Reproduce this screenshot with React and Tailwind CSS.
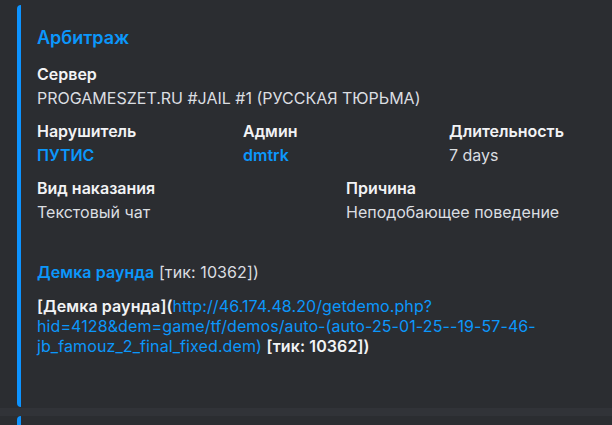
const fields = [
  { name: "Нарушитель", value: "ПУТИС", link: true, span: "col-span-4" },
  { name: "Админ", value: "dmtrk", link: true, span: "col-span-4" },
  { name: "Длительность", value: "7 days", span: "col-span-4" },
  { name: "Вид наказания", value: "Текстовый чат", span: "col-span-6" },
  { name: "Причина", value: "Неподобающее поведение", span: "col-span-6" },
];

const Field = ({ name, value, link, span }) => (
  <div className={span}>
    <div className="h-5 leading-5 text-base font-semibold text-[#f2f3f5]">{name}</div>
    <div
      className={`mt-1 h-5 leading-5 text-base ${
        link ? "font-semibold text-[#0b97fb]" : "text-[#dbdee1]"
      }`}
    >
      {value}
    </div>
  </div>
);

const App = () => {
  return (
    <div
      className="w-[612px] h-[425px] overflow-hidden bg-[#2b2d31]"
      style={{ fontFamily: 'Inter, "Noto Sans", sans-serif' }}
    >
      <div className="pt-[5px] pl-[17px]">
        {/* Embed */}
        <div className="w-[660px] border-l-4 border-[#0d93ff] rounded-[4px] bg-[#2b2d31] pl-4 pt-[22px] pb-[51px]">
          <div className="h-[22px] leading-[22px] text-lg font-semibold text-[#0b97fb]">Арбитраж</div>

          <div className="mt-[15px]">
            <div className="h-5 leading-5 text-base font-semibold text-[#f2f3f5]">Сервер</div>
            <div className="mt-1 h-5 leading-5 text-base text-[#dbdee1]">
              PROGAMESZET.RU #JAIL #1 (РУССКАЯ ТЮРЬМА)
            </div>
          </div>

          <div className="mt-[13px] w-[610px] grid grid-cols-12 gap-x-2 gap-y-[13px]">
            {fields.map((f) => (
              <Field key={f.name} {...f} />
            ))}
          </div>

          {/* Description */}
          <div className="mt-10 text-base leading-5 tracking-[0.1px] text-[#dbdee1]">
            <p>
              <span className="font-semibold text-[#0b97fb]">Демка раунда</span> [тик: 10362])
            </p>
            <p className="mt-[14px]">
              <span className="font-semibold text-[#f2f3f5]">[Демка раунда](</span>
              <span className="text-[#0b97fb]">
                http://46.174.48.20/getdemo.php?
                <br />
                hid=4128&amp;dem=game/tf/demos/auto-(auto-25-01-25--19-57-46-
                <br />
                jb_famouz_2_final_fixed.dem)
              </span>{" "}
              <span className="font-semibold text-[#f2f3f5]">[тик: 10362])</span>
            </p>
          </div>
        </div>

        {/* Gap band and next embed */}
        <div className="-ml-[17px] mt-px h-[8px] bg-[#313338]" />
        <div className="w-[660px] h-10 border-l-4 border-[#0d93ff] rounded-[4px] bg-[#2b2d31]" />
      </div>
    </div>
  );
};

export default App;
